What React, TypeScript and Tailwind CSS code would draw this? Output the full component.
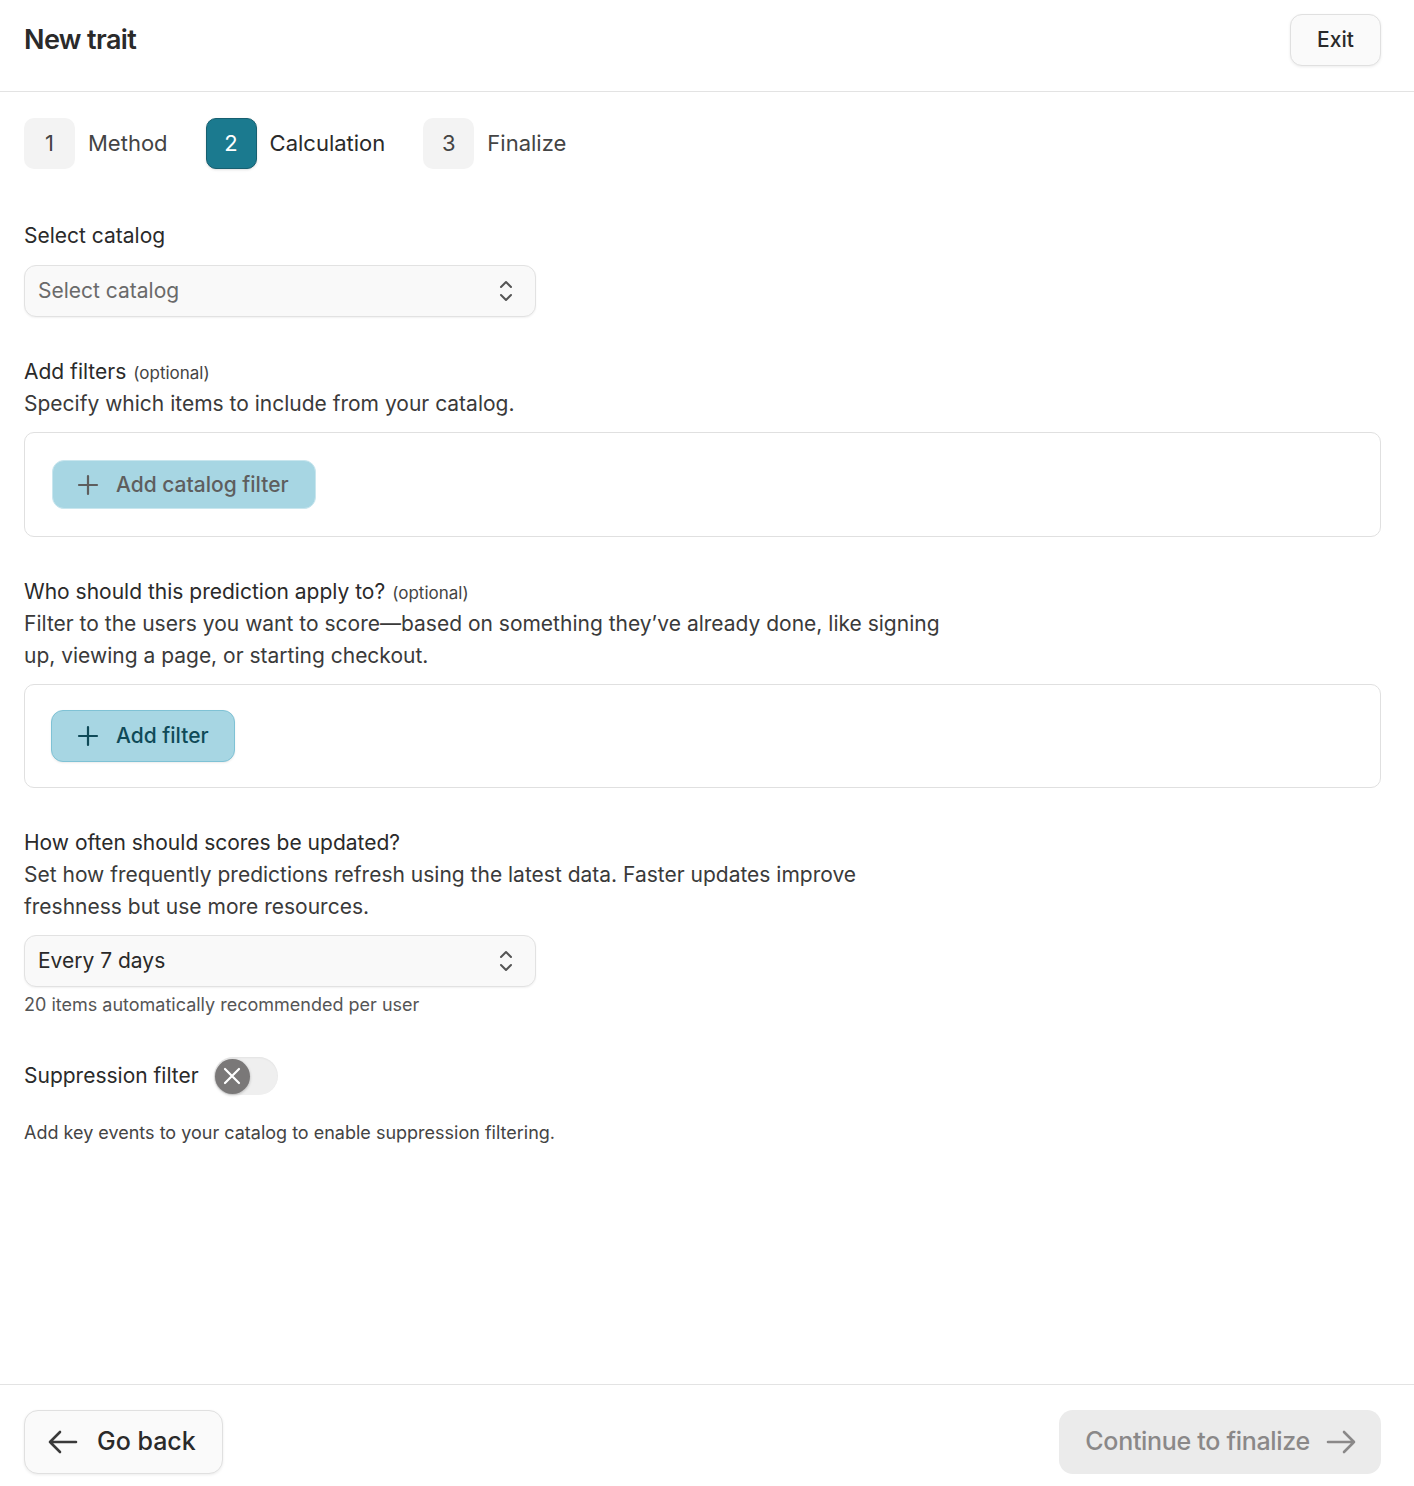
import React from 'react';

function Chevrons() {
  return (
    <svg width="18" height="26" viewBox="0 0 18 26" fill="none" stroke="#555" strokeWidth="2" strokeLinecap="round" strokeLinejoin="round">
      <path d="M4 9l5-5 5 5" />
      <path d="M4 17l5 5 5-5" />
    </svg>
  );
}

function Plus({ color }: { color: string }) {
  return (
    <svg width="22" height="22" viewBox="0 0 22 22" fill="none" stroke={color} strokeWidth="2.2" strokeLinecap="round">
      <path d="M11 2v18M2 11h18" />
    </svg>
  );
}

function Arrow({ dir, color }: { dir: 'left' | 'right'; color: string }) {
  return (
    <svg width="32" height="26" viewBox="0 0 32 26" fill="none" stroke={color} strokeWidth="2.6" strokeLinecap="round" strokeLinejoin="round">
      {dir === 'left' ? (
        <path d="M29 13H3M13 3L3 13l10 10" />
      ) : (
        <path d="M3 13h26M19 3l10 10-10 10" />
      )}
    </svg>
  );
}

function Step({ n, label, active }: { n: number; label: string; active?: boolean }) {
  return (
    <div className="flex items-center gap-[13px]">
      <div
        className={
          active
            ? 'flex h-[51px] w-[51px] items-center justify-center rounded-[10px] border border-[#175f70] bg-[#1b7a8f] text-[22px] text-white shadow-sm'
            : 'flex h-[51px] w-[51px] items-center justify-center rounded-[10px] bg-[#f3f3f3] text-[22px] text-[#444]'
        }
      >
        {n}
      </div>
      <span className={active ? 'text-[22px] text-[#2a2a2a]' : 'text-[22px] text-[#444]'}>{label}</span>
    </div>
  );
}

function SelectBox({ value, placeholder }: { value: string; placeholder?: boolean }) {
  return (
    <div className="flex h-[52px] w-[512px] items-center justify-between rounded-[12px] border border-[#e2e2e2] bg-[#f9f9f9] pl-[13px] pr-[20px] shadow-[0_1px_2px_rgba(0,0,0,0.06)]">
      <span className={placeholder ? 'text-[21px] text-[#6a6a6a]' : 'text-[21px] text-[#2a2a2a]'}>{value}</span>
      <Chevrons />
    </div>
  );
}

function Label({ text, optional }: { text: string; optional?: boolean }) {
  return (
    <div className="flex h-[32px] items-baseline gap-[7px] leading-[32px]">
      <span className="text-[21px] text-[#2a2a2a]">{text}</span>
      {optional && <span className="text-[17px] text-[#444]">(optional)</span>}
    </div>
  );
}

export default function App() {
  return (
    <div className="flex min-h-[1486px] w-full flex-col bg-white text-[#2a2a2a]" style={{ fontFamily: 'Inter, "Liberation Sans", sans-serif' }}>
      {/* Header */}
      <header className="flex h-[92px] items-start justify-between border-b border-[#e3e3e3] pl-6 pr-[33px] pt-[14px]">
        <h1 className="mt-[9px] text-[27px] font-semibold leading-[34px] tracking-[-0.6px] text-[#2a2a2a]">New trait</h1>
        <button className="h-[52px] w-[91px] rounded-[12px] border border-[#e0e0e0] bg-[#fafafa] text-[21px] font-medium text-[#2a2a2a] shadow-[0_1px_3px_rgba(0,0,0,0.08)]">
          Exit
        </button>
      </header>

      <main className="flex flex-1 flex-col pl-6 pr-[33px] pt-[26px]">
        {/* Stepper */}
        <div className="flex items-center gap-[38px]">
          <Step n={1} label="Method" />
          <Step n={2} label="Calculation" active />
          <Step n={3} label="Finalize" />
        </div>

        {/* Select catalog */}
        <div className="mt-[51px]">
          <Label text="Select catalog" />
        </div>
        <div className="mt-[13px]">
          <SelectBox value="Select catalog" placeholder />
        </div>

        {/* Add filters */}
        <div className="mt-[39px]">
          <Label text="Add filters" optional />
        </div>
        <p className="text-[21px] leading-[32px] text-[#3a3a3a]">Specify which items to include from your catalog.</p>
        <div className="mt-[12px] rounded-[10px] border border-[#e0e0e0] px-[27px] py-[27px]">
          <button className="flex h-[49px] items-center gap-[17px] rounded-[12px] border border-[#c9e6ee] bg-[#a7d6e3] pl-[24px] pr-[26px] text-[21px] font-medium text-[#5e5e5e]">
            <Plus color="#5e5e5e" />
            Add catalog filter
          </button>
        </div>

        {/* Who should */}
        <div className="mt-[39px]">
          <Label text="Who should this prediction apply to?" optional />
        </div>
        <p className="max-w-[922px] text-[21px] leading-[32px] text-[#3a3a3a]">
          Filter to the users you want to score—based on something they’ve already done, like signing up, viewing a page, or starting checkout.
        </p>
        <div className="mt-[12px] rounded-[10px] border border-[#e0e0e0] px-[26px] py-[25px]">
          <button className="flex h-[52px] items-center gap-[17px] rounded-[12px] border border-[#7fc2d5] bg-[#a7d6e3] pl-[25px] pr-[25px] text-[21px] font-medium text-[#0f4a58] shadow-[0_1px_2px_rgba(0,0,0,0.08)]">
            <Plus color="#0f4a58" />
            Add filter
          </button>
        </div>

        {/* How often */}
        <div className="mt-[39px]">
          <Label text="How often should scores be updated?" />
        </div>
        <p className="max-w-[860px] text-[21px] leading-[32px] text-[#3a3a3a]">
          Set how frequently predictions refresh using the latest data. Faster updates improve freshness but use more resources.
        </p>
        <div className="mt-[12px]">
          <SelectBox value="Every 7 days" />
        </div>
        <p className="mt-[4px] text-[18px] leading-[28px] text-[#555]">20 items automatically recommended per user</p>

        {/* Suppression */}
        <div className="mt-[38px] flex items-center gap-[15px]">
          <span className="text-[21px]">Suppression filter</span>
          <div className="flex h-[38px] w-[64px] items-center rounded-full bg-[#efefef] pl-[1px] shadow-[inset_0_1px_2px_rgba(0,0,0,0.05)]">
            <div className="flex h-[35px] w-[35px] items-center justify-center rounded-full bg-[#7a7878] shadow-[0_1px_3px_rgba(0,0,0,0.25)]">
              <svg width="20" height="20" viewBox="0 0 20 20" fill="none" stroke="#fff" strokeWidth="2.2" strokeLinecap="round">
                <path d="M3 3l14 14M17 3L3 17" />
              </svg>
            </div>
          </div>
        </div>
        <p className="mt-[24px] text-[18px] leading-[28px] text-[#444]">Add key events to your catalog to enable suppression filtering.</p>
      </main>

      {/* Footer */}
      <footer className="flex h-[102px] items-start justify-between border-t border-[#e3e3e3] pl-6 pr-[33px] pt-[25px]">
        <button className="flex h-[64px] items-center gap-[18px] rounded-[14px] border border-[#e0e0e0] bg-[#fafafa] pl-[22px] pr-[26px] text-[25px] font-medium text-[#2a2a2a] shadow-[0_1px_3px_rgba(0,0,0,0.08)]">
          <Arrow dir="left" color="#3a3a3a" />
          Go back
        </button>
        <button className="flex h-[64px] items-center gap-[15px] rounded-[14px] bg-[#ebebeb] pl-[26px] pr-[24px] text-[25px] font-medium tracking-[-0.3px] text-[#8a8888]">
          Continue to finalize
          <Arrow dir="right" color="#8a8888" />
        </button>
      </footer>
    </div>
  );
}
